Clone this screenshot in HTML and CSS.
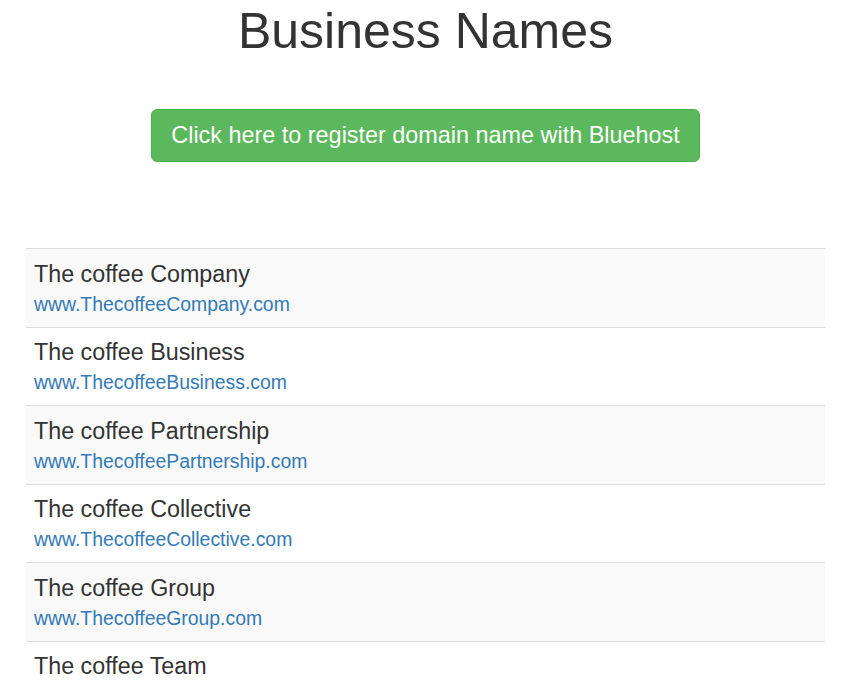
FILE: index.html
```html
<!DOCTYPE html>
<html>
<head>
<meta charset="utf-8">
<link rel="stylesheet" href="styles.css">
</head>
<body>
<div class="page">
  <h1 class="title">Business Names</h1>
  <div class="cta">
    <a class="btn" href="#">Click here to register domain name with Bluehost</a>
  </div>
  <div class="list">
    <div class="row"><div class="name">The coffee Company</div><a class="url" href="#">www.ThecoffeeCompany.com</a></div>
    <div class="row"><div class="name">The coffee Business</div><a class="url" href="#">www.ThecoffeeBusiness.com</a></div>
    <div class="row"><div class="name">The coffee Partnership</div><a class="url" href="#">www.ThecoffeePartnership.com</a></div>
    <div class="row"><div class="name">The coffee Collective</div><a class="url" href="#">www.ThecoffeeCollective.com</a></div>
    <div class="row"><div class="name">The coffee Group</div><a class="url" href="#">www.ThecoffeeGroup.com</a></div>
    <div class="row"><div class="name">The coffee Team</div><a class="url" href="#">www.ThecoffeeTeam.com</a></div>
  </div>
</div>
</body>
</html>
```

FILE: styles.css
```css
html, body {
  margin: 0;
  padding: 0;
  background: #fff;
}
body {
  font-family: "Liberation Sans", Arial, Helvetica, sans-serif;
  color: #333;
  overflow: hidden;
}
.page {
  padding: 5px 25px 0 26px;
}
.title {
  margin: 0;
  text-align: center;
  font-size: 50px;
  font-weight: 400;
  line-height: 53px;
  color: #333;
}
.cta {
  display: flex;
  justify-content: center;
  margin-top: 51px;
}
.btn {
  display: block;
  background: #5cb85c;
  border: 1px solid #4cae4c;
  border-radius: 6px;
  color: #fff;
  text-decoration: none;
  font-size: 23.4px;
  line-height: 31px;
  padding: 10px 19px 10px;
}
.list {
  margin-top: 86px;
}
.row {
  border-top: 1px solid #ddd;
  padding: 8.5px 8px 8.3px;
}
.row:nth-child(odd) {
  background: #f9f9f9;
}
.name {
  font-size: 23.3px;
  line-height: 33px;
  color: #333;
}
.url {
  display: block;
  font-size: 19.4px;
  line-height: 27.8px;
  color: #337ab7;
  text-decoration: none;
}
```
